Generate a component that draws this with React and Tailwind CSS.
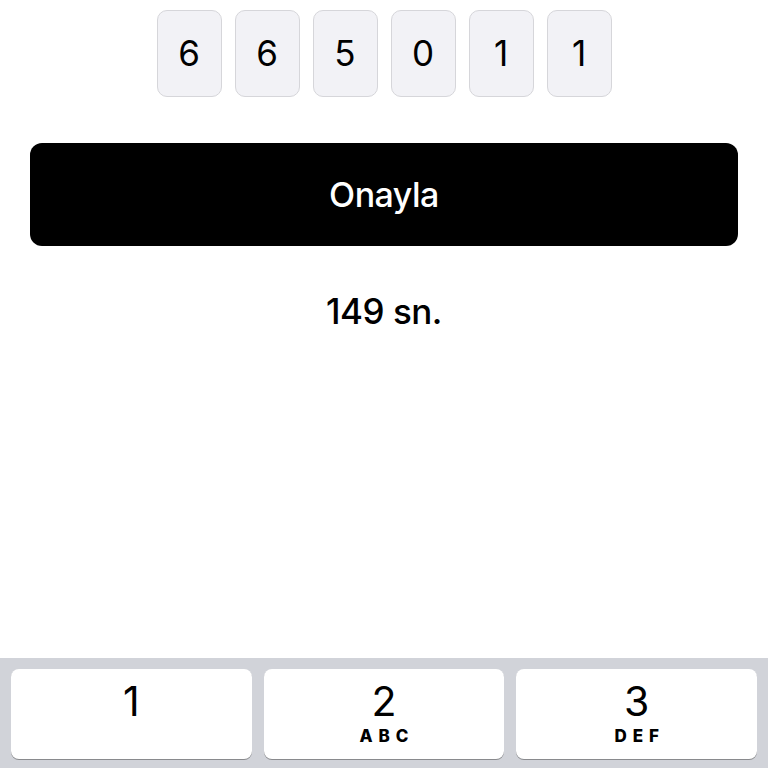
export default function App() {
  const digits = ["6", "6", "5", "0", "1", "1"];
  const keys = [
    { n: "1", l: "" },
    { n: "2", l: "ABC" },
    { n: "3", l: "DEF" },
  ];
  return (
    <div
      className="w-[768px] h-[768px] bg-white flex flex-col overflow-hidden"
      style={{ fontFamily: "Inter, 'Noto Sans', sans-serif" }}
    >
      <div className="flex justify-center gap-[13px] pt-[10px]">
        {digits.map((d, i) => (
          <div
            key={i}
            className="w-[65px] h-[87px] rounded-[10px] bg-[#f2f2f6] border border-[#d6d6da] flex items-center justify-center text-[35px] leading-none text-black"
          >
            {d}
          </div>
        ))}
      </div>
      <div className="px-[30px] mt-[46px]">
        <div className="h-[103px] rounded-[12px] bg-black flex items-center justify-center text-white text-[34px] leading-none font-medium tracking-[-0.5px]">
          Onayla
        </div>
      </div>
      <div className="mt-[48px] h-[35px] text-center text-[35px] leading-none font-medium text-black tracking-[-0.5px]">
        149 sn.
      </div>
      <div className="flex-1" />
      <div className="h-[110px] bg-[#d1d3d9] flex gap-[12px] px-[11px] pt-[11px]">
        {keys.map((k) => (
          <div
            key={k.n}
            className="flex-1 h-[90px] rounded-[8px] bg-white shadow-[0_1px_0_#898a8d] flex flex-col items-center"
          >
            <div className="text-[41px] leading-none mt-[12px] text-black font-normal">{k.n}</div>
            <div className="text-[17px] font-extrabold tracking-[6px] mt-[6px] pl-[6px] text-black leading-none">
              {k.l}
            </div>
          </div>
        ))}
      </div>
    </div>
  );
}
